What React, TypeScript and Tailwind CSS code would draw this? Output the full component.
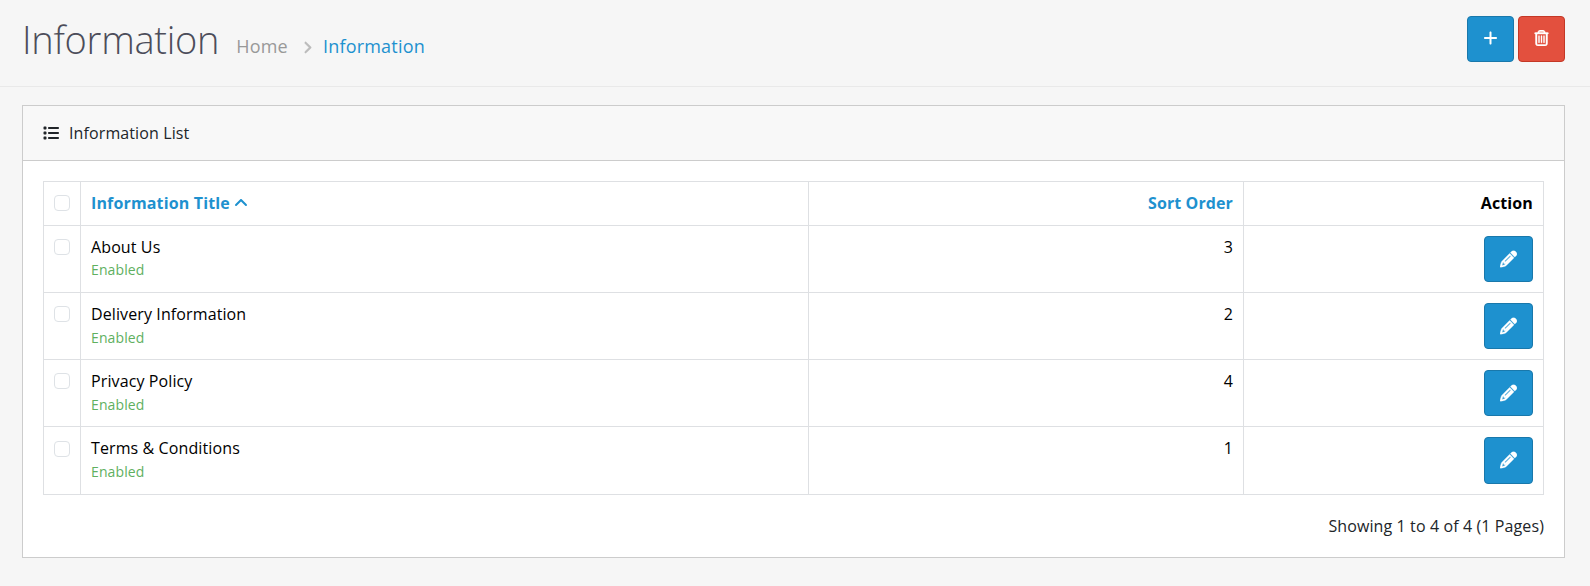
import type { ReactNode } from "react";
import { FaAngleRight, FaAngleUp, FaList, FaPencil, FaPlus, FaRegTrashCan } from "react-icons/fa6";

type Row = { title: string; order: number; height: string; button: string; check: string; status: string };

const rows: Row[] = [
  { title: "About Us", order: 3, height: "h-[67px]", button: "h-[46px]", check: "mt-0", status: "pt-0" },
  { title: "Delivery Information", order: 2, height: "h-[67px]", button: "h-[46px]", check: "mt-0", status: "pt-px" },
  { title: "Privacy Policy", order: 4, height: "h-[67px]", button: "h-[46px]", check: "mt-0", status: "pt-px" },
  { title: "Terms & Conditions", order: 1, height: "h-[68px]", button: "h-[47px]", check: "mt-px", status: "pt-px" },
];

function Check({ className = "" }: { className?: string }) {
  return (
    <input
      type="checkbox"
      className={`block size-4 appearance-none rounded-[4px] border border-[#dee2e6] bg-white ${className}`}
    />
  );
}

function Cell({ children, className = "pt-[9px]" }: { children: ReactNode; className?: string }) {
  return (
    <td className={`border-r border-b border-[#dee0e3] px-[10px] pb-0 align-top leading-6 ${className}`}>
      {children}
    </td>
  );
}

export default function App() {
  return (
    <div className="h-[586px] bg-[#f6f6f6] font-['Open_Sans',sans-serif] text-base tracking-[0.11px] text-[#212529]">
      <header className="flex h-[87px] items-start justify-between border-b border-[#e9e9e9] pr-[25px] pl-[22px]">
        <div className="flex items-baseline pt-[10px]">
          <h1 className="translate-y-px text-[38px] leading-[57px] font-light tracking-[-0.27px] text-[#4c4d5a]">Information</h1>
          <nav className="ml-[17px] flex items-baseline text-[18px] leading-[27px] tracking-[0.2px]">
            <a className="text-[#999999]">Home</a>
            <FaAngleRight className="mr-[8px] ml-[12px] size-[15px] translate-y-[2px] stroke-[#bbbbbb] stroke-[12] text-[#bbbbbb]" />
            <a className="text-[#1e91cf]">Information</a>
          </nav>
        </div>
        <div className="flex gap-1 pt-4 text-white">
          <button className="flex h-[46px] w-[47px] items-center justify-center rounded-[4px] border border-[#1978ab] bg-[#1e91cf]">
            <FaPlus className="size-4 -translate-x-[0.5px] -translate-y-px" />
          </button>
          <button className="flex h-[46px] w-[47px] items-center justify-center rounded-[4px] border border-[#c43826] bg-[#e3503e]">
            <FaRegTrashCan className="size-4 -translate-x-[0.5px] -translate-y-px stroke-white stroke-[14]" />
          </button>
        </div>
      </header>

      <main className="mt-[18px] mr-[25px] ml-[22px] h-[453px] border border-[#cccccc] bg-white">
        <div className="flex h-[55px] items-center border-b border-[#cccccc] bg-[#f8f8f8] px-5">
          <FaList className="mr-[10px] size-4" />
          <span>Information List</span>
        </div>
        <div className="px-5 pt-5">
          <table className="w-full table-fixed border-separate border-spacing-0 border-t border-l border-[#dee0e3] text-black">
            <colgroup>
              <col className="w-[37px]" />
              <col className="w-[728px]" />
              <col className="w-[435px]" />
              <col />
            </colgroup>
            <thead>
              <tr className="h-[44px] font-bold">
                <Cell className="pt-[13px]"><Check /></Cell>
                <Cell>
                  <a className="flex items-center tracking-[0.15px] text-[#1e91cf]">
                    Information Title
                    <FaAngleUp className="ml-[3px] size-4" />
                  </a>
                </Cell>
                <Cell className="pt-[9px] text-right text-[#1e91cf]">Sort Order</Cell>
                <Cell className="pt-[9px] text-right">Action</Cell>
              </tr>
            </thead>
            <tbody>
              {rows.map((row) => (
                <tr key={row.title} className={row.height}>
                  <Cell className="pt-[13px]"><Check className={row.check} /></Cell>
                  <Cell>
                    <div>{row.title}</div>
                    <div className={`text-sm leading-[21px] text-[#5fb05f] ${row.status}`}>Enabled</div>
                  </Cell>
                  <Cell className="pt-[9px] text-right">{row.order}</Cell>
                  <Cell className="pt-[10px]">
                    <button className={`ml-auto flex w-[49px] items-center justify-center rounded-[4px] border border-[#1978ab] bg-[#1e91cf] text-white ${row.button}`}>
                      <FaPencil className="size-[17px] -translate-y-[0.5px] stroke-white stroke-[12]" />
                    </button>
                  </Cell>
                </tr>
              ))}
            </tbody>
          </table>
          <div className="pt-[19px] text-right leading-6">Showing 1 to 4 of 4 (1 Pages)</div>
        </div>
      </main>
    </div>
  );
}
